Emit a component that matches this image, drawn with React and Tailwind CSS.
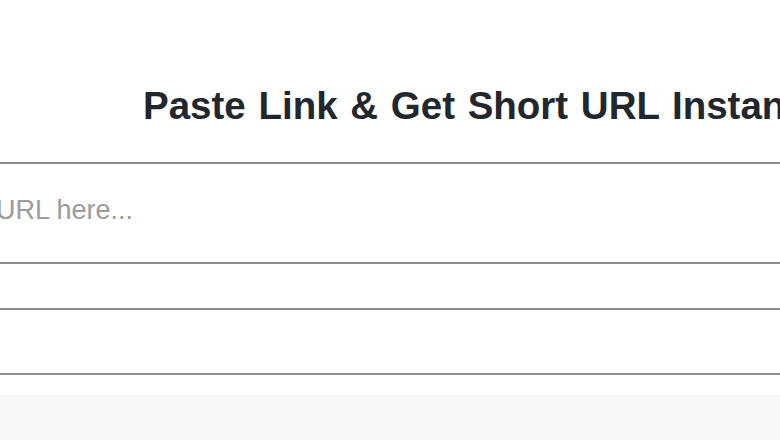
import React from "react";

export default function App() {
  return (
    <div
      className="w-[780px] h-[440px] overflow-hidden bg-white flex flex-col"
      style={{ fontFamily: '"Liberation Sans", Arial, sans-serif' }}
    >
      <div className="pt-[84px] pl-[143px] whitespace-nowrap">
        <h1 className="text-[38.5px] leading-[44px] font-bold text-[#22272d] [word-spacing:2px]">
          Paste Link &amp; Get Short URL Instantly
        </h1>
      </div>
      <div className="mt-[34px] flex flex-col">
        <div className="h-[102px] border-y-2 border-[#8e8e8e] overflow-hidden pt-[31px]">
          <input
            type="text"
            placeholder="URL here..."
            className="ml-[-4px] w-[700px] h-[30px] p-0 text-[27px] leading-[30px] bg-transparent outline-none text-[#333] placeholder:text-[#9c9c9c]"
            style={{ fontFamily: '"Liberation Sans", Arial, sans-serif' }}
          />
        </div>
        <div className="h-[46px] border-b-2 border-[#8e8e8e]" />
        <div className="h-[65px] border-b-2 border-[#8e8e8e]" />
      </div>
      <div className="h-[20px] bg-white" />
      <div className="flex-1 bg-[#f7f8fa]" />
    </div>
  );
}
